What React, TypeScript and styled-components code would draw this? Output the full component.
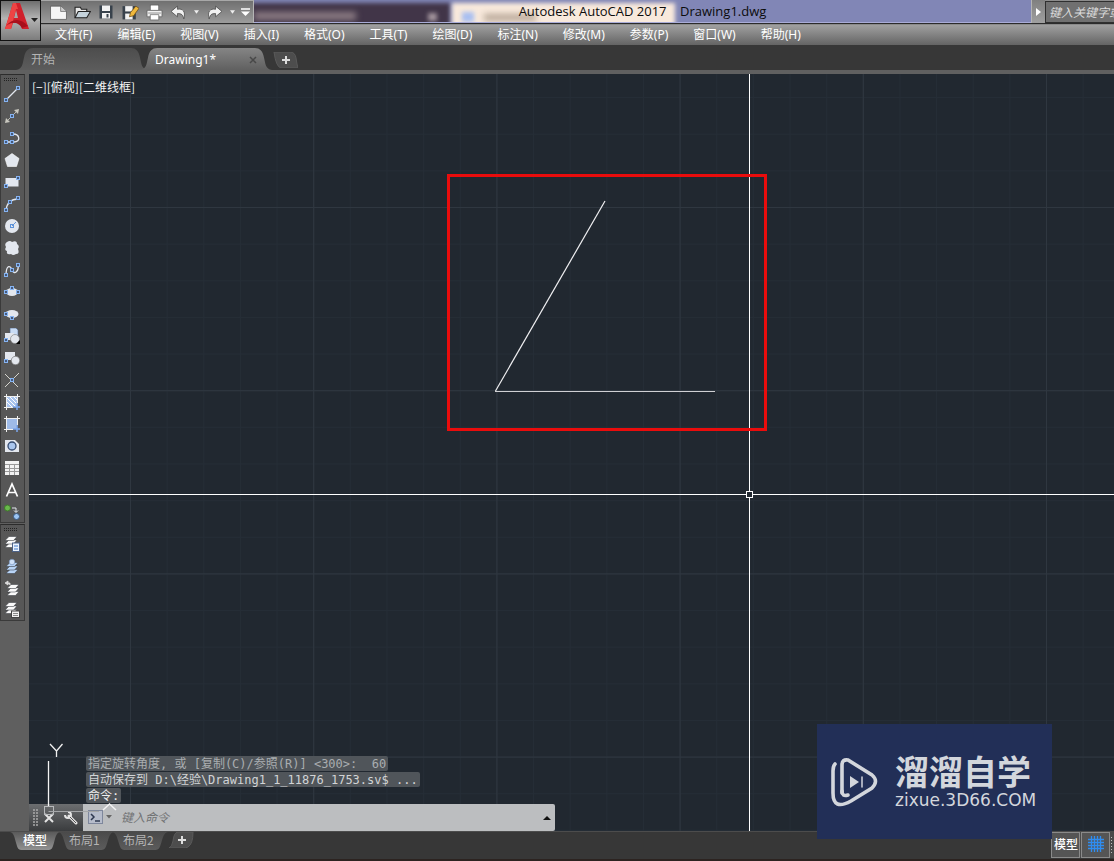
import React, { ReactNode } from 'react';
import styled, { createGlobalStyle, css } from 'styled-components';

const ui = `"Open Sans", "Noto Sans CJK SC", sans-serif`;
const cjk = `"Noto Sans CJK SC", "Noto Sans", sans-serif`;
const menuFont = `"Noto Sans", "Noto Sans CJK SC", sans-serif`;
const mono = `"DejaVu Sans Mono", "Noto Sans CJK SC", monospace`;

const GlobalStyle = createGlobalStyle`
  * { box-sizing: border-box; }
  body { margin: 0; background: #373737; font-family: ${cjk}; font-size: 12px; }
  button, input { font: inherit; color: inherit; }
  button { margin: 0; padding: 0; border: 0; background: none; cursor: default; }
  svg { display: block; }
`;

const Page = styled.div`
  display: flex;
  flex-direction: column;
  min-height: 100vh;
  overflow: hidden;
`;

/* ---------- header ---------- */

const Header = styled.header`
  display: flex;
  align-items: flex-start;
  height: 45px;
  background: linear-gradient(#747474 0, #747474 24px, #a0a0a0 25px, #646464 45px);
`;

const AppButton = styled.button`
  display: flex;
  align-items: center;
  flex: none;
  width: 41px;
  height: 41px;
  border: 1px solid #111;
  background: linear-gradient(#6e6e6e, #b4b4b4 45%, #7c7c7c);
`;

const HeaderRows = styled.div`
  flex: 1;
  min-width: 0;
`;

const TitleRow = styled.div`
  display: flex;
  height: 24px;
  border-bottom: 1px solid #2b2b2b;
`;

const QuickAccess = styled.div`
  display: flex;
  align-items: center;
  flex: none;
  padding-left: 5px;
  border-top: 1px solid #a8a8a8;
  border-right: 1px solid #b5b5b5;
  background: linear-gradient(#707070, #9c9c9c);
`;

const QuickButton = styled.button<{ $w?: number }>`
  display: flex;
  justify-content: center;
  align-items: center;
  width: ${(p) => p.$w ?? 24}px;
  height: 22px;
`;

const TitleBar = styled.div`
  position: relative;
  display: flex;
  justify-content: center;
  align-items: center;
  flex: 1;
  overflow: hidden;
  border-bottom: 1px solid #a9acd8;
  color: #0c0c0c;
  background: #8186b6;
`;

const GlassPane = styled.div<{ $left: number; $width: number; $color: string; $top?: number; $height?: number; $blur?: number }>`
  position: absolute;
  left: ${(p) => p.$left}px;
  top: ${(p) => p.$top ?? 3}px;
  width: ${(p) => p.$width}px;
  height: ${(p) => p.$height ?? 26}px;
  background: ${(p) => p.$color};
  filter: blur(${(p) => p.$blur ?? 2}px);
`;

const Title = styled.h1`
  position: relative;
  margin: 0;
  font: 400 13px/20px ${ui};
  white-space: pre;
`;

const Search = styled.form`
  display: flex;
  flex: none;
  width: 83px;
  background: #8d8d8d;
`;

const SearchToggle = styled.button`
  display: flex;
  align-items: center;
  justify-content: center;
  width: 14px;
  border-left: 1px solid #b4b4b4;
  background: linear-gradient(#808080, #a0a0a0);
`;

const SearchInput = styled.input`
  flex: 1;
  min-width: 0;
  height: 22px;
  margin-top: 1px;
  padding: 0 0 2px 3px;
  border: 1px solid #2f2f2f;
  border-right: 0;
  background: #707070;
  font-style: italic;
  font-size: 12px;
  &::placeholder { color: #dcdcdc; opacity: 1; }
`;

const MenuBar = styled.nav`
  display: flex;
  gap: 25px;
  height: 21px;
  padding-left: 14px;
`;

const MenuItem = styled.button`
  font-family: ${menuFont};
  line-height: 20px;
  color: #fff;
  white-space: nowrap;
`;

/* ---------- tabs ---------- */

const FileTabs = styled.div`
  display: flex;
  align-items: flex-end;
  height: 29px;
  padding-left: 16px;
  border-bottom: 4px solid #606060;
  background: #373737;
`;

const Tab = styled.button<{ $w: number; $h: number; $pad: number; $active?: boolean; $overlap?: number }>`
  position: relative;
  z-index: ${(p) => (p.$active ? 1 : 0)};
  display: flex;
  align-items: center;
  flex: none;
  width: ${(p) => p.$w}px;
  height: ${(p) => p.$h}px;
  margin-left: -${(p) => p.$overlap ?? 0}px;
  padding: 0 ${(p) => p.$pad}px;
  color: ${(p) => (p.$active ? '#fff' : '#b4b4b4')};
  font-weight: ${(p) => (p.$active ? 500 : 400)};
  line-height: 16px;
`;

const FileTab = styled(Tab)`
  justify-content: space-between;
  padding-top: 2px;
  font-family: ${menuFont};
  font-weight: 400;
`;

const LayoutTab = styled(Tab)`
  padding-bottom: 2px;
`;

const TabLabel = styled.span`
  position: relative;
  white-space: nowrap;
`;

const TabGlyph = styled.span`
  position: relative;
  display: flex;
  margin: 0 auto;
`;

const ShapeSvg = styled.svg`
  position: absolute;
  inset: 0;
  width: 100%;
  height: 100%;
`;

const AddTab = styled.button<{ $bottom?: boolean }>`
  position: relative;
  display: flex;
  align-items: center;
  width: 25px;
  height: 16px;
  ${(p) => (p.$bottom ? css`margin-left: 1px;` : css`margin: 0 0 2px 1px;`)}
`;

function TabShape({ id, from, to, flip }: { id: string; from: string; to: string; flip?: boolean }) {
  const d = flip
    ? 'M0 0 C8 1 9 6 12 12 C15 18 17 20 22 20 H78 C83 20 85 18 88 12 C91 6 92 1 100 0 Z'
    : 'M0 20 C5 19 5 14 6 9 C7 3 9 0 13 0 H87 C91 0 93 3 94 9 C95 14 95 19 100 20 Z';
  return (
    <ShapeSvg viewBox="0 0 100 20" preserveAspectRatio="none" aria-hidden="true">
      <defs>
        <linearGradient id={id} x1="0" y1="0" x2="0" y2="1">
          <stop offset="0" stopColor={from} />
          <stop offset="1" stopColor={to} />
        </linearGradient>
      </defs>
      <path d={d} fill={`url(#${id})`} />
    </ShapeSvg>
  );
}

function AddShape({ flip }: { flip?: boolean }) {
  return (
    <ShapeSvg viewBox="0 0 25 16" preserveAspectRatio="none" aria-hidden="true">
      <path
        d={flip ? 'M0 16 Q3 15 4 9 Q5 0 9 0 H24 Q24 12 19 15 Q17 16 14 16 Z' : 'M1 0 H17 Q22 0 23 6 Q24 13 25 16 H8 Q3 15 1 0 Z'}
        fill="#4d4d4d"
        stroke="#5a5a5a"
      />
    </ShapeSvg>
  );
}

const Plus = () => (
  <svg width="8" height="8" viewBox="0 0 8 8">
    <path d="M4 0V8M0 4H8" stroke="#ddd" strokeWidth="2" />
  </svg>
);

/* ---------- workspace ---------- */

const Workspace = styled.main`
  display: flex;
  flex: 1;
  background: #5f5f5f;
`;

const Gutter = styled.div`
  display: flex;
  flex-direction: column;
  gap: 1px;
  flex: none;
  width: 29px;
`;

const ToolBar = styled.div`
  display: flex;
  flex-direction: column;
  width: 25px;
  border: 1px solid #3a3a3a;
  border-top-color: #2c2c2c;
  background: #575757;
`;

const Grip = styled.div`
  height: 5px;
  margin: 2px 6px 0 3px;
  background:
    repeating-linear-gradient(#575757 0 1px, transparent 1px 2px),
    repeating-linear-gradient(90deg, #222 0 1px, #575757 1px 2px);
`;

const ToolButton = styled.button`
  display: flex;
  align-items: center;
  justify-content: center;
  height: 22px;
  padding: 2px 1px 0 0;
`;

const Canvas = styled.section`
  position: relative;
  flex: 1;
  min-width: 0;
  background: #212830;
`;

const Drawing = styled.svg`
  position: absolute;
  inset: 0;
  width: 100%;
  height: 100%;
`;

const ViewLabel = styled.button`
  position: relative;
  padding: 3px 0 0 3px;
  color: #f4f4f4;
  line-height: 20px;
`;

const CommandPanel = styled.div`
  position: absolute;
  left: 0;
  bottom: 0;
  width: 526px;
`;

const History = styled.div`
  display: flex;
  flex-direction: column;
  align-items: flex-start;
  gap: 1px;
  padding: 0 0 1px 57px;
`;

const HistoryLine = styled.div<{ $color: string }>`
  height: 15px;
  padding: 0 2px;
  border-radius: 2px;
  background: #50555a;
  color: ${(p) => p.$color};
  font: 12px/16px ${mono};
  white-space: pre;
`;

const CommandBar = styled.form`
  display: flex;
  height: 27px;
  background: #bcbec0;
  border-radius: 2px;
`;

const CommandHandle = styled.div`
  display: flex;
  align-items: center;
  flex: none;
  width: 54px;
  padding-left: 4px;
  background: linear-gradient(#6c6e70, #3a3c3e);
`;

const CommandButton = styled.button<{ $w: number }>`
  display: flex;
  align-items: center;
  justify-content: center;
  flex: none;
  width: ${(p) => p.$w}px;
  height: 27px;
`;

const CommandInput = styled.input`
  flex: 1;
  min-width: 0;
  padding: 0 0 2px 4px;
  border: 0;
  outline: 0;
  background: transparent;
  font-size: 12px;
  font-style: italic;
  &::placeholder { color: #707274; opacity: 1; }
`;

const UcsIcon = styled.svg`
  position: absolute;
  left: 0;
  bottom: 0;
  pointer-events: none;
`;

/* ---------- bottom bar ---------- */

const BottomBar = styled.footer`
  display: flex;
  justify-content: space-between;
  height: 30px;
  border-top: 1px solid #4c4c4c;
  border-bottom: 2px solid #2c2320;
  background: #373737;
`;

const LayoutTabs = styled.div`
  display: flex;
  align-items: flex-start;
  padding-left: 10px;
`;

const StatusTray = styled.div`
  display: flex;
  gap: 1px;
  width: 63px;
  height: 26px;
  background: #4a4a4a;
`;

const StatusButton = styled.button`
  display: flex;
  align-items: center;
  justify-content: center;
  flex: none;
  width: 29px;
  padding: 0 0 3px 1px;
  border: 1px solid #8a8a8a;
  background: #555;
  color: #fff;
  font-weight: 500;
  line-height: 16px;
  white-space: nowrap;
`;

const TrayDots = styled.div`
  width: 1px;
  margin: 5px 0;
  background: repeating-linear-gradient(#bbb 0 1px, transparent 1px 3px);
`;

const Watermark = styled.aside`
  position: absolute;
  right: 62px;
  bottom: -8px;
  z-index: 2;
  display: flex;
  align-items: center;
  gap: 16px;
  width: 235px;
  height: 115px;
  padding-left: 14px;
  background: #222f57;
  color: #d3d6dc;
`;

const BrandName = styled.div`
  font: 700 34px/34px ${cjk};
  white-space: nowrap;
`;

const BrandSite = styled.div`
  padding-top: 2px;
  font: 17px/20px "DejaVu Sans", sans-serif;
  white-space: nowrap;
`;

/* ---------- icon helpers ---------- */

const light = '#e3e7ee';
const node = '#86b4f2';

const Dot = ({ x, y }: { x: number; y: number }) => (
  <rect x={x - 1.5} y={y - 1.5} width="3" height="3" fill="#46597a" stroke={node} />
);

const Icon = ({ children, size = 16 }: { children: ReactNode; size?: number }) => (
  <svg width={size} height={size} viewBox="0 0 16 16" fill="none">
    {children}
  </svg>
);

const Caret = ({ fill = '#eee', w = 5 }: { fill?: string; w?: number }) => (
  <svg width={w} height="4" viewBox="0 0 6 4">
    <path d="M0 0H6L3 4Z" fill={fill} />
  </svg>
);

const Sheets = ({ x = 3, y = 1, fill = '#fafafa' }: { x?: number; y?: number; fill?: string }) => (
  <g transform={`translate(${x} ${y})`} fill={fill} stroke="#33373d" strokeWidth=".5">
    <path d="M4 7.500H12L8.500 11.500H0Z" />
    <path d="M4 4H12L8.500 8H0Z" />
    <path d="M4 .5H12L8.500 4.500H0Z" />
  </g>
);

const drawTools: [string, ReactNode][] = [
  ['直线', <><path d="M2 14L14 2" stroke={light} strokeWidth="1.300" /><Dot x={2} y={14} /><Dot x={14} y={2} /></>],
  ['构造线', <><path d="M3 13L13 3" stroke="#b8b8b0" /><path d="M15 1L14 6L10 2ZM1 15L2 10L6 14Z" fill="#c9c8bf" /><Dot x={8} y={8} /></>],
  ['多段线', <><path d="M1 12H10C17 12 16 4 9 4" stroke={light} strokeWidth="1.300" /><Dot x={2} y={12} /><Dot x={8} y={12} /><Dot x={8} y={4} /></>],
  ['多边形', <path d="M8 1.500L15 6.500L12.500 14.500H3.500L1 6.500Z" fill={light} stroke="#fff" strokeWidth=".6" />],
  ['矩形', <><rect x="1.500" y="4" width="13" height="8.500" fill={light} /><Dot x={14} y={4} /><Dot x={2} y={12} /></>],
  ['圆弧', <><path d="M2 14C3 7 7 3 14 3" stroke={light} strokeWidth="1.300" /><Dot x={2} y={14} /><Dot x={6} y={6} /><Dot x={14} y={2} /></>],
  ['圆', <><circle cx="8" cy="8" r="7" fill={light} /><path d="M8 8L12 4" stroke="#5f93d8" /><rect x="6.500" y="6.500" width="3" height="3" stroke="#5f93d8" /></>],
  ['修订云线', <path d="M3 2Q6 0 8 2Q13 0 13 4Q16 6 14 9Q16 14 12 14Q9 16 7 14Q2 15 3 11Q0 10 2 7Q0 4 3 2Z" fill={light} />],
  ['样条曲线', <><path d="M2 14C2 1 7 4 8 8C10 13 15 10 14 3" stroke={light} strokeWidth="1.300" /><Dot x={2} y={13} /><Dot x={8} y={8} /><Dot x={14} y={3} /></>],
  ['椭圆', <><ellipse cx="8" cy="8" rx="6" ry="4" fill={light} /><Dot x={2} y={8} /><Dot x={14} y={8} /><Dot x={8} y={4} /></>],
  ['椭圆弧', <><ellipse cx="8" cy="8" rx="6.500" ry="4" fill={light} /><Dot x={2} y={8} /><Dot x={8} y={12} /></>],
  ['插入块', <><path d="M6 0H12L14 2V8H6Z" fill="#c9dcf5" stroke="#4c6288" strokeWidth=".6" /><rect x="1" y="5" width="9" height="7" fill={light} /><circle cx="11" cy="11" r="4.500" fill={light} stroke="#777" strokeWidth=".6" /><Dot x={2} y={12} /><path d="M16 12V16H12Z" fill="#000" /></>],
  ['创建块', <><rect x="1" y="2" width="10" height="8" fill={light} /><circle cx="11.500" cy="10.500" r="4.200" fill={light} stroke="#777" strokeWidth=".7" /><Dot x={2} y={11} /></>],
  ['点', <><path d="M1 15L15 1M1 2L14 15" stroke="#d5d5cf" /><Dot x={8} y={8} /></>],
  ['图案填充', <><rect x="3" y="3" width="10" height="10" fill="#a9c4ee" /><path d="M3 8L8 13M3 4L12 13M6 3L13 10M10 3L13 6" stroke="#fff" /><path d="M0 2.500H16M2.500 0V16M0 13.500H9M13.500 0V9" stroke="#f0f0f0" /><path d="M13 9V16M9 13H16" stroke="#7da8ee" strokeWidth="1.500" /></>],
  ['渐变色', <><rect x="3" y="3" width="10" height="10" fill="#9fbbe8" /><path d="M0 2.500H16M2.500 0V16M0 13.500H9M13.500 0V9" stroke="#f0f0f0" /><path d="M13 9V16M9 13H16" stroke="#7da8ee" strokeWidth="1.500" /></>],
  ['面域', <><path d="M1 2H11L15 6V14H1Z" fill={light} /><circle cx="8" cy="8" r="4" fill="#a9c6ee" stroke="#33496e" strokeWidth="1.300" /></>],
  ['表格', <><rect x="1" y="1" width="14" height="14" fill="#f2f2f2" /><path d="M1 4.500H15M1 8.500H15M1 11.500H15M5.500 5V15M10.500 5V15" stroke="#999" /></>],
  ['多行文字', <path d="M2.500 14.500L8 2L13.500 14.500M4.500 10.500H11.500" stroke="#fff" strokeWidth="1.700" />],
  ['添加选定对象', <><circle cx="3.500" cy="4" r="3" fill="#69b94c" stroke="#3f7a2b" /><path d="M8 4H12V8M10 6.500L12 8.500L14 6.500" stroke={light} /><circle cx="12.500" cy="12.500" r="3" fill="#9cc4f3" stroke="#39567e" /></>],
];

const layerTools: [string, ReactNode][] = [
  ['图层特性', <><Sheets x={1} y={0} /><rect x="8.500" y="7" width="7" height="8.500" fill="#eaf2fd" stroke="#4c6288" /><path d="M10 10H14M10 13H14" stroke="#3e78c8" /></>],
  ['置为当前', <><Sheets x={2} y={4} fill="#b8d4f6" /><circle cx="8" cy="4" r="2.800" fill="#cfe1f8" stroke="#6d8cb8" strokeWidth=".6" /></>],
  ['上一个图层', <><Sheets x={3} y={4} /><path d="M1 3L4 1V5ZM3 3H6V5" fill="#ddd" stroke="#ddd" strokeWidth=".8" /></>],
  ['图层状态', <><Sheets x={1} y={0} /><rect x="7.500" y="9" width="8" height="6.500" fill="#f2f2f2" stroke="#444" /><path d="M9 11.500H14M9 13.500H14" stroke="#888" /></>],
];

const Undo = () => <path d="M1 7L7 2V5C12 4 15 7 13 14C12 10 11 9 7 9V12Z" fill="#f2f2f2" stroke="#444" strokeWidth=".7" />;

const quickTools: [string, number, ReactNode][] = [
  ['新建', 24, <Icon size={17}><path d="M.5 2H10L15.500 7V14.500H.5Z" fill="#f5f5f5" stroke="#555" strokeWidth=".7" /><path d="M10 2V7H15.500" fill="#ccc" stroke="#555" strokeWidth=".6" /></Icon>],
  ['打开', 24, <Icon size={17}><path d="M1 13V3H6L7 5H12V7" fill="#e9e9e9" stroke="#222" /><path d="M1 13L4 7H15.500L12 13Z" fill="#c5d3dc" stroke="#222" /></Icon>],
  ['保存', 24, <Icon><path d="M1.500 1.500H14.500V14.500H1.500Z" fill="#38424c" /><rect x="4" y="1.500" width="8" height="5.500" fill="#f2f2f2" /><rect x="4" y="9" width="8" height="5.500" fill="#f2f2f2" /><rect x="8.500" y="10" width="2" height="3.500" fill="#38424c" /></Icon>],
  ['另存为', 24, <Icon size={17}><path d="M.5 2H13V14.500H.5Z" fill="#38424c" /><rect x="3" y="2" width="7" height="5" fill="#f2f2f2" /><rect x="3" y="9" width="7" height="5.500" fill="#f2f2f2" /><path d="M7 12L8 8L13 2L16 4L11 11Z" fill="#f0b93d" stroke="#6a4a14" strokeWidth=".7" /></Icon>],
  ['打印', 24, <Icon size={17}><rect x="4" y="1" width="8" height="5" fill="#fff" stroke="#555" strokeWidth=".6" /><path d="M1 6H15V12H1Z" fill="#f2f2f2" stroke="#555" strokeWidth=".6" /><path d="M2 8.500H14" stroke="#999" /><path d="M4 10H12V15H4Z" fill="#fff" stroke="#555" strokeWidth=".6" /></Icon>],
  ['放弃', 24, <Icon size={17}><Undo /></Icon>],
  ['放弃列表', 12, <Caret />],
  ['重做', 24, <Icon size={17}><g transform="matrix(-1 0 0 1 16 0)"><Undo /></g></Icon>],
  ['重做列表', 12, <Caret />],
  ['自定义', 15, <svg width="9" height="8" viewBox="0 0 9 8"><path d="M0 1H9" stroke="#fff" strokeWidth="1.500" /><path d="M0 3.500H9L4.500 8Z" fill="#fff" /></svg>],
];

const menus = ['文件(F)', '编辑(E)', '视图(V)', '插入(I)', '格式(O)', '工具(T)', '绘图(D)', '标注(N)', '修改(M)', '参数(P)', '窗口(W)', '帮助(H)'];

export default function App() {
  return (
    <Page>
      <GlobalStyle />
      <Header>
        <AppButton aria-label="应用程序菜单">
          <svg width="39" height="39" viewBox="0 0 39 39">
            <path d="M4 28L12 2H19L28 28H21L19 22H12L10 28Z" fill="#d0202b" />
            <path d="M13 17H17L15 9Z" fill="#a8a8a8" />
            <path d="M4 28L12 2H15L17 8H15L10 28Z" fill="#ee4444" />
            <path d="M5 25C11 17 20 17 27 25L21 27C16 20 11 21 5 25Z" fill="#a8101c" />
            <path d="M30 17H37L33.500 21Z" fill="#222" />
          </svg>
        </AppButton>
        <HeaderRows>
          <TitleRow>
            <QuickAccess>
              {quickTools.map(([name, w, icon]) => (
                <QuickButton key={name} aria-label={name} $w={w}>{icon}</QuickButton>
              ))}
            </QuickAccess>
            <TitleBar>
              <GlassPane $left={-4} $width={200} $color="#413548" />
              <GlassPane $left={0} $top={12} $width={102} $height={8} $color="#8d7d84" $blur={3} />
              <GlassPane $left={174} $top={13} $width={9} $height={8} $color="#a2949c" />
              <GlassPane $left={198} $width={223} $color="#f8e9dc" />
              <GlassPane $left={208} $top={12} $width={12} $height={10} $color="#a9bff0" />
              <GlassPane $left={230} $top={14} $width={52} $height={7} $color="#b8a898" $blur={3} />
              <Title>{'Autodesk AutoCAD 2017    Drawing1.dwg'}</Title>
            </TitleBar>
            <Search>
              <SearchToggle type="button" aria-label="展开搜索">
                <svg width="5" height="8" viewBox="0 0 5 8"><path d="M0 0L5 4L0 8Z" fill="#fff" /></svg>
              </SearchToggle>
              <SearchInput aria-label="搜索" placeholder="键入关键字或" />
            </Search>
          </TitleRow>
          <MenuBar>
            {menus.map((m) => <MenuItem key={m}>{m}</MenuItem>)}
          </MenuBar>
        </HeaderRows>
      </Header>

      <FileTabs>
        <FileTab $w={132} $h={22} $pad={15}>
          <TabShape id="tab-start" from="#4d4d4d" to="#5c5c5c" />
          <TabLabel>开始</TabLabel>
        </FileTab>
        <FileTab $w={132} $h={22} $pad={15} $overlap={8} $active>
          <TabShape id="tab-drawing" from="#858585" to="#606060" />
          <TabLabel>Drawing1*</TabLabel>
          <TabLabel>
            <svg width="8" height="8" viewBox="0 0 8 8"><path d="M1 1L7 7M7 1L1 7" stroke="#484848" strokeWidth="1.500" /></svg>
          </TabLabel>
        </FileTab>
        <AddTab aria-label="新图形">
          <AddShape />
          <TabGlyph><Plus /></TabGlyph>
        </AddTab>
      </FileTabs>

      <Workspace>
        <Gutter>
          <ToolBar role="toolbar" aria-label="绘图">
            <Grip />
            {drawTools.map(([name, icon]) => (
              <ToolButton key={name} aria-label={name}><Icon>{icon}</Icon></ToolButton>
            ))}
          </ToolBar>
          <ToolBar role="toolbar" aria-label="图层">
            <Grip />
            {layerTools.map(([name, icon]) => (
              <ToolButton key={name} aria-label={name}><Icon>{icon}</Icon></ToolButton>
            ))}
          </ToolBar>
        </Gutter>

        <Canvas>
          <Drawing shapeRendering="crispEdges" aria-hidden="true">
            <defs>
              <pattern id="minor" x="101" y="133" width="36.640" height="36.640" patternUnits="userSpaceOnUse">
                <path d="M.5 0V37M0 .5H37" stroke="#252d36" />
              </pattern>
              <pattern id="major" x="101" y="133" width="183.200" height="183.200" patternUnits="userSpaceOnUse">
                <path d="M.5 0V184M0 .5H184" stroke="#2f3740" />
              </pattern>
            </defs>
            <rect width="100%" height="100%" fill="url(#minor)" />
            <rect width="100%" height="100%" fill="url(#major)" />
            <path d="M576 127L466.500 317" stroke="#f0f0f2" strokeWidth="1.200" shapeRendering="auto" />
            <path d="M466 317.500H686" stroke="#d0d0d4" />
            <path d="M720.500 0V417M720.500 424V2000M0 420.500H717M724 420.500H4000" stroke="#fff" />
            <rect x="717.500" y="417.500" width="6" height="6" fill="none" stroke="#fff" />
            <rect x="419.500" y="101.500" width="317" height="254" fill="none" stroke="#ea0c0c" strokeWidth="3" />
          </Drawing>
          <ViewLabel>[−][俯视][二维线框]</ViewLabel>

          <CommandPanel>
            <History>
              <HistoryLine $color="#a9adb0">{'指定旋转角度, 或 [复制(C)/参照(R)] <300>:  60'}</HistoryLine>
              <HistoryLine $color="#d2d4d6">{'自动保存到 D:\\经验\\Drawing1_1_11876_1753.sv$ ...'}</HistoryLine>
              <HistoryLine $color="#f0f0f0">命令:</HistoryLine>
            </History>
            <CommandBar>
              <CommandHandle>
                <svg width="5" height="18" viewBox="0 0 5 18"><path d="M1 0V18M4 0V18" stroke="#aaa" strokeWidth="1.500" strokeDasharray="2 1" /></svg>
                <CommandButton type="button" $w={22} aria-label="关闭">
                  <svg width="10" height="10" viewBox="0 0 10 10"><path d="M1 1L9 9M9 1L1 9" stroke="#e4e4e4" strokeWidth="2" /></svg>
                </CommandButton>
                <CommandButton type="button" $w={22} aria-label="自定义">
                  <svg width="14" height="14" viewBox="0 0 14 14" fill="none">
                    <path d="M5 5L12 12" stroke="#e4e4e4" strokeWidth="3" strokeLinecap="round" />
                    <path d="M4 1A3 3 0 1 1 1 4" stroke="#e4e4e4" strokeWidth="2" />
                    <path d="M6 6L12 12" stroke="#555" />
                  </svg>
                </CommandButton>
              </CommandHandle>
              <CommandButton type="button" $w={34} aria-label="最近使用的命令">
                <svg width="24" height="15" viewBox="0 0 24 15" fill="none">
                  <rect x=".5" y=".5" width="14" height="13" fill="#b6bccb" stroke="#7e879c" />
                  <path d="M3 4L6 7L3 10M7 11H12" stroke="#2e3850" strokeWidth="1.500" />
                  <path d="M18 5H24L21 8.500Z" fill="#666" />
                </svg>
              </CommandButton>
              <CommandInput aria-label="命令" placeholder="键入命令" />
              <CommandButton type="button" $w={16} aria-label="命令历史">
                <svg width="8" height="4" viewBox="0 0 8 4"><path d="M0 4H8L4 0Z" fill="#111" /></svg>
              </CommandButton>
            </CommandBar>
          </CommandPanel>

          <UcsIcon width="100" height="92" viewBox="0 0 100 92" fill="none" aria-hidden="true">
            <path d="M21 5L27.500 12M33.500 5L27.500 12V18" stroke="#f0f0f0" strokeWidth="1.300" />
            <path d="M19.500 22V68" stroke="#f4f4f4" strokeWidth="1.300" />
            <rect x="15.500" y="67.500" width="9" height="8" stroke="#b8babc" />
            <path d="M19.500 72.500H70" stroke="#a4a6a8" />
            <path d="M74 71L80.500 65L87 71" stroke="#f4f4f4" strokeWidth="1.500" />
          </UcsIcon>

          <Watermark>
            <svg width="48" height="50" viewBox="0 0 48 50" fill="none" stroke="#d3d6dc" strokeLinecap="round">
              <path d="M11 36V8Q11 2 17 3L41 18Q48 24 41 31L20 44Q2 54 2 36V14Q2 9 4 7" strokeWidth="3.600" />
              <path d="M11 34Q11 40 17 38" strokeWidth="3.600" />
              <path d="M19 19V31L28 25Z" fill="#d3d6dc" stroke="none" />
              <path d="M31 20V30" strokeWidth="1.500" />
            </svg>
            <div>
              <BrandName>溜溜自学</BrandName>
              <BrandSite>zixue.3D66.COM</BrandSite>
            </div>
          </Watermark>
        </Canvas>
      </Workspace>

      <BottomBar>
        <LayoutTabs>
          <LayoutTab $w={50} $h={18} $pad={13} $active>
            <TabShape id="layout-model" from="#5a5a5a" to="#929292" flip />
            <TabLabel>模型</TabLabel>
          </LayoutTab>
          <LayoutTab $w={56} $h={18} $pad={11} $overlap={2}>
            <TabShape id="layout-1" from="#4a4a4a" to="#5c5c5c" flip />
            <TabLabel>布局1</TabLabel>
          </LayoutTab>
          <LayoutTab $w={56} $h={18} $pad={11} $overlap={2}>
            <TabShape id="layout-2" from="#4a4a4a" to="#5c5c5c" flip />
            <TabLabel>布局2</TabLabel>
          </LayoutTab>
          <AddTab $bottom aria-label="新建布局">
            <AddShape flip />
            <TabGlyph><Plus /></TabGlyph>
          </AddTab>
        </LayoutTabs>
        <StatusTray>
          <StatusButton>模型</StatusButton>
          <StatusButton aria-label="显示图形栅格">
            <svg width="16" height="16" viewBox="0 0 16 16">
              <path d="M3.500 0V16M6.500 0V16M9.500 0V16M12.500 0V16M0 3.500H16M0 6.500H16M0 9.500H16M0 12.500H16" stroke="#2f8df0" strokeWidth="1.300" />
            </svg>
          </StatusButton>
          <TrayDots />
        </StatusTray>
      </BottomBar>
    </Page>
  );
}
